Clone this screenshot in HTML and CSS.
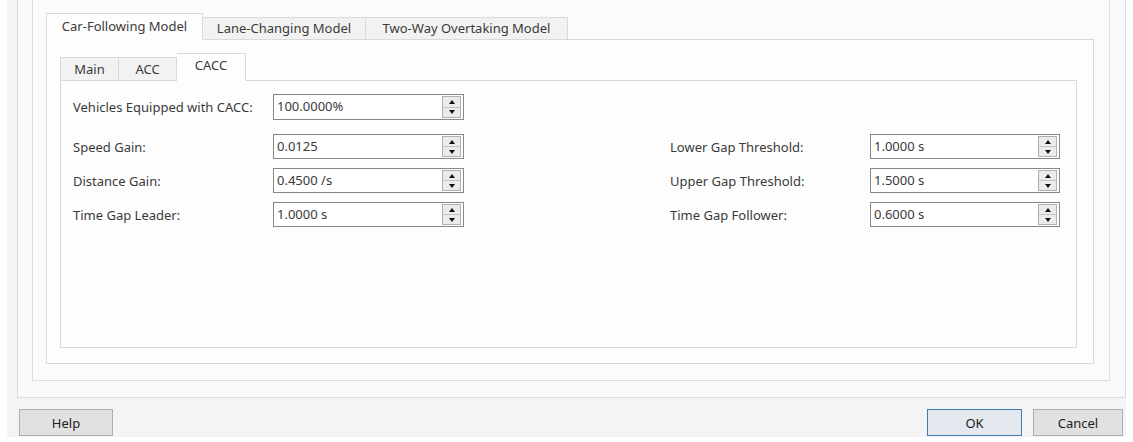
FILE: index.html
```html
<!DOCTYPE html>
<html lang="en">
<head>
<meta charset="utf-8">
<title>Driving Behavior</title>
<link rel="stylesheet" href="styles.css">
</head>
<body>
<div class="dialog">
  <div class="frame-outer">
    <div class="frame-inner">
      <div class="tabs">
        <div class="tab-bar">
          <div class="tab tab-car active">Car-Following Model</div>
          <div class="tab tab-lane">Lane-Changing Model</div>
          <div class="tab tab-two">Two-Way Overtaking Model</div>
        </div>
        <div class="tab-pane">
          <div class="subtabs">
            <div class="subtab-bar">
              <div class="subtab subtab-main">Main</div>
              <div class="subtab subtab-acc">ACC</div>
              <div class="subtab subtab-cacc active">CACC</div>
            </div>
            <div class="subtab-pane">
              <div class="row row-first">
                <label class="label">Vehicles Equipped with CACC:</label>
                <div class="spinbox"><span class="value">100.0000%</span><span class="spin"><span class="up"></span><span class="down"></span></span></div>
              </div>
              <div class="grid">
                <label class="label">Speed Gain:</label>
                <div class="spinbox"><span class="value">0.0125</span><span class="spin"><span class="up"></span><span class="down"></span></span></div>
                <label class="label label-right">Lower Gap Threshold:</label>
                <div class="spinbox spinbox-right"><span class="value">1.0000 s</span><span class="spin"><span class="up"></span><span class="down"></span></span></div>

                <label class="label">Distance Gain:</label>
                <div class="spinbox"><span class="value">0.4500 /s</span><span class="spin"><span class="up"></span><span class="down"></span></span></div>
                <label class="label label-right">Upper Gap Threshold:</label>
                <div class="spinbox spinbox-right"><span class="value">1.5000 s</span><span class="spin"><span class="up"></span><span class="down"></span></span></div>

                <label class="label">Time Gap Leader:</label>
                <div class="spinbox"><span class="value">1.0000 s</span><span class="spin"><span class="up"></span><span class="down"></span></span></div>
                <label class="label label-right">Time Gap Follower:</label>
                <div class="spinbox spinbox-right"><span class="value">0.6000 s</span><span class="spin"><span class="up"></span><span class="down"></span></span></div>
              </div>
            </div>
          </div>
        </div>
      </div>
    </div>
  </div>
  <div class="buttons">
    <button class="btn btn-help">Help</button>
    <div class="spacer"></div>
    <button class="btn btn-ok">OK</button>
    <button class="btn btn-cancel">Cancel</button>
  </div>
</div>
</body>
</html>
```

FILE: styles.css
```css
html, body {
  margin: 0;
  padding: 0;
  background: #ffffff;
}

body {
  font-family: "Noto Sans", "Open Sans", sans-serif;
  font-size: 13px;
  color: #3a3a3a;
}

/* dialog window body */
.dialog {
  margin-left: 7px;
  width: 1119px;
  height: 437px;
  background: #f4f4f4;
  padding-left: 10px;
  box-sizing: border-box;
}

/* framed group boxes; their top edges run above the visible area */
.frame-outer {
  width: 1109px;
  height: 398px;
  box-sizing: border-box;
  border: 1px solid #dddddd;
  border-top: none;
  background: #fafafa;
  padding: 0 15px 16px 14px;
}

.frame-inner {
  height: 100%;
  box-sizing: border-box;
  border: 1px solid #dddddd;
  border-top: none;
  background: #fbfbfb;
  padding: 13px 15px 16px 13px;
  display: flex;
  flex-direction: column;
}

.tabs {
  flex: 1;
  display: flex;
  flex-direction: column;
}

.tab-bar {
  display: flex;
  align-items: flex-end;
  height: 27px;
  position: relative;
  z-index: 1;
  margin-bottom: -1px;
}

.tab {
  height: 23px;
  line-height: 21px;
  box-sizing: border-box;
  background: #f2f2f2;
  border: 1px solid #d9d9d9;
  border-left: none;
  white-space: nowrap;
  text-align: center;
}

.tab-car {
  width: 157px;
}

.tab-lane {
  width: 163px;
}

.tab-two {
  width: 202px;
}

.tab.active {
  height: 27px;
  line-height: 24px;
  background: #fdfdfd;
  border-left: 1px solid #d9d9d9;
  border-bottom-color: #fdfdfd;
}

.tab-pane {
  flex: 1;
  border: 1px solid #d9d9d9;
  background: #fdfdfd;
  padding: 13px 16px 15px 13px;
  display: flex;
  flex-direction: column;
}

.subtabs {
  flex: 1;
  display: flex;
  flex-direction: column;
}

.subtab-bar {
  display: flex;
  align-items: flex-end;
  height: 28px;
  position: relative;
  z-index: 1;
  margin-bottom: -1px;
}

.subtab {
  height: 24px;
  line-height: 22px;
  box-sizing: border-box;
  background: #f2f2f2;
  border: 1px solid #d9d9d9;
  border-left: none;
  white-space: nowrap;
  text-align: center;
}

.subtab-main {
  width: 59px;
  border-left: 1px solid #d9d9d9;
}

.subtab-acc {
  width: 58px;
}

.subtab.active {
  width: 69px;
  height: 28px;
  line-height: 22px;
  background: #fdfdfd;
  border-bottom-color: #fdfdfd;
}

.subtab-pane {
  flex: 1;
  border: 1px solid #d9d9d9;
  background: #fdfdfd;
  padding: 13px 12px 0 12px;
}

.row {
  display: flex;
  align-items: center;
}

.row-first {
  margin-bottom: 14px;
}

.row-first .spinbox {
  height: 26px;
}

.label {
  width: 200px;
  flex: none;
  white-space: nowrap;
}

.grid {
  display: grid;
  grid-template-columns: 200px 191px 206px 200px 190px;
  grid-auto-rows: 25px;
  row-gap: 9px;
  align-items: center;
}

.label-right {
  grid-column: 4;
}

.spinbox {
  width: 191px;
  height: 25px;
  box-sizing: border-box;
  border: 1px solid #878787;
  background: #ffffff;
  display: flex;
  align-items: stretch;
  padding: 1px 2px 1px 0;
}

.spinbox-right {
  width: 190px;
}

.value {
  flex: 1;
  padding-left: 3px;
  line-height: 21px;
}

.spin {
  width: 17px;
  display: flex;
  flex-direction: column;
  border: 1px solid #b0b0b0;
  background: #ebebeb;
}

.spin .up,
.spin .down {
  flex: 1;
  display: flex;
  align-items: center;
  justify-content: center;
}

.spin .up {
  border-bottom: 1px solid #c4c4c4;
}

.spin .up::before {
  content: "";
  border-left: 3px solid transparent;
  border-right: 3px solid transparent;
  border-bottom: 4px solid #111111;
}

.spin .down::before {
  content: "";
  border-left: 3px solid transparent;
  border-right: 3px solid transparent;
  border-top: 4px solid #111111;
}

/* dialog buttons */
.buttons {
  display: flex;
  align-items: center;
  padding: 11px 3px 0 2px;
}

.spacer {
  flex: 1;
}

.btn {
  font-family: inherit;
  font-size: 13px;
  color: #222222;
  height: 27px;
  box-sizing: border-box;
  border: 1px solid #adadad;
  background: #e1e1e1;
  padding: 0;
}

.btn-help {
  width: 94px;
}

.btn-ok {
  width: 95px;
  border: 1px solid #3d7db8;
  background: #e3e8ee;
  margin-right: 11px;
}

.btn-cancel {
  width: 90px;
}
```
